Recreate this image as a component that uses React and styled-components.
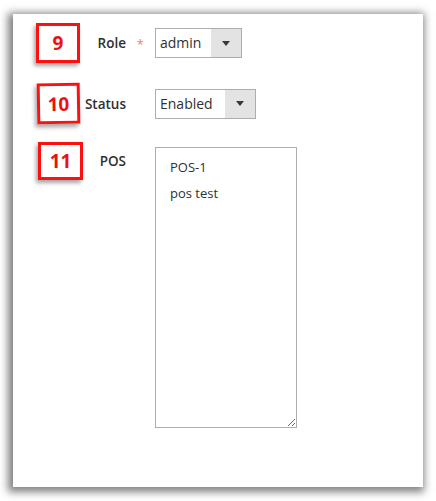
import React from "react";
import styled, { createGlobalStyle } from "styled-components";

const Global = createGlobalStyle`
  html, body {
    margin: 0;
    background: #ffffff;
  }
  body {
    font-family: "Open Sans", "Liberation Sans", sans-serif;
    color: #303030;
  }
`;

const Page = styled.div`
  width: 436px;
  height: 501px;
  padding: 14px 13px;
  box-sizing: border-box;
`;

const Panel = styled.div`
  width: 410px;
  height: 473px;
  background: #fff;
  box-shadow: -2px 2px 8px 3px rgba(0, 0, 0, 0.5);
  padding: 9px 0 0 23px;
  box-sizing: border-box;
  display: flex;
  flex-direction: column;
`;

const Row = styled.div`
  display: grid;
  grid-template-columns: 90px 29px auto;
  align-items: ${(p) => (p.top ? "start" : "center")};
  height: ${(p) => p.h}px;
  margin-bottom: ${(p) => p.gap || 0}px;
`;

const LabelCell = styled.div`
  display: flex;
  align-items: center;
  justify-content: space-between;
`;

const Badge = styled.div`
  width: ${(p) => p.w || 44}px;
  height: ${(p) => p.bh || 40}px;
  box-sizing: border-box;
  border: 3px solid #ff1010;
  background: #fff;
  color: #ee1111;
  font-weight: 700;
  font-size: 19px;
  display: flex;
  align-items: center;
  justify-content: center;
  box-shadow: -2px 3px 4px rgba(0, 0, 0, 0.35);
  margin-left: ${(p) => p.ml || 0}px;
  transform: rotate(${(p) => p.rot || 0}deg);
`;

const Label = styled.span`
  font-size: 13.5px;
  font-weight: 600;
  color: #303030;
  line-height: 38px;
`;

const Required = styled.span`
  color: #ef7a5c;
  font-size: 12px;
  padding-left: 11px;
  padding-top: 2px;
`;

const Select = styled.div`
  width: ${(p) => p.w}px;
  height: 30px;
  box-sizing: border-box;
  border: 1px solid #adadad;
  display: flex;
  background: #fff;
  font-size: 14px;
  color: #303030;
`;

const SelectText = styled.div`
  flex: 1;
  padding-left: 4px;
  line-height: 28px;
`;

const Arrow = styled.div`
  width: 30px;
  background: #e3e3e3;
  display: flex;
  align-items: center;
  justify-content: center;
  &::after {
    content: "";
    border-left: 4px solid transparent;
    border-right: 4px solid transparent;
    border-top: 5px solid #41362f;
  }
`;

const Area = styled.textarea`
  width: 142px;
  height: 281px;
  margin-top: 5px;
  box-sizing: border-box;
  border: 1px solid #adadad;
  border-radius: 0;
  padding: 6px 14px;
  font-family: "Open Sans", "Liberation Sans", sans-serif;
  font-size: 13px;
  line-height: 26px;
  color: #303030;
  resize: both;
  outline: none;
`;

export default function App() {
  return (
    <>
      <Global />
      <Page>
        <Panel>
          <Row h={40} gap={20}>
            <LabelCell>
              <Badge>9</Badge>
              <Label>Role</Label>
            </LabelCell>
            <Required>*</Required>
            <Select w={87}>
              <SelectText>admin</SelectText>
              <Arrow />
            </Select>
          </Row>
          <Row h={41} gap={18}>
            <LabelCell>
              <Badge ml={1} w={43} bh={41} rot={-1}>10</Badge>
              <Label>Status</Label>
            </LabelCell>
            <span />
            <Select w={101}>
              <SelectText>Enabled</SelectText>
              <Arrow />
            </Select>
          </Row>
          <Row h={290} top>
            <LabelCell>
              <Badge ml={2} w={45} bh={38}>11</Badge>
              <Label>POS</Label>
            </LabelCell>
            <span />
            <Area readOnly value={"POS-1\npos test"} />
          </Row>
        </Panel>
      </Page>
    </>
  );
}
